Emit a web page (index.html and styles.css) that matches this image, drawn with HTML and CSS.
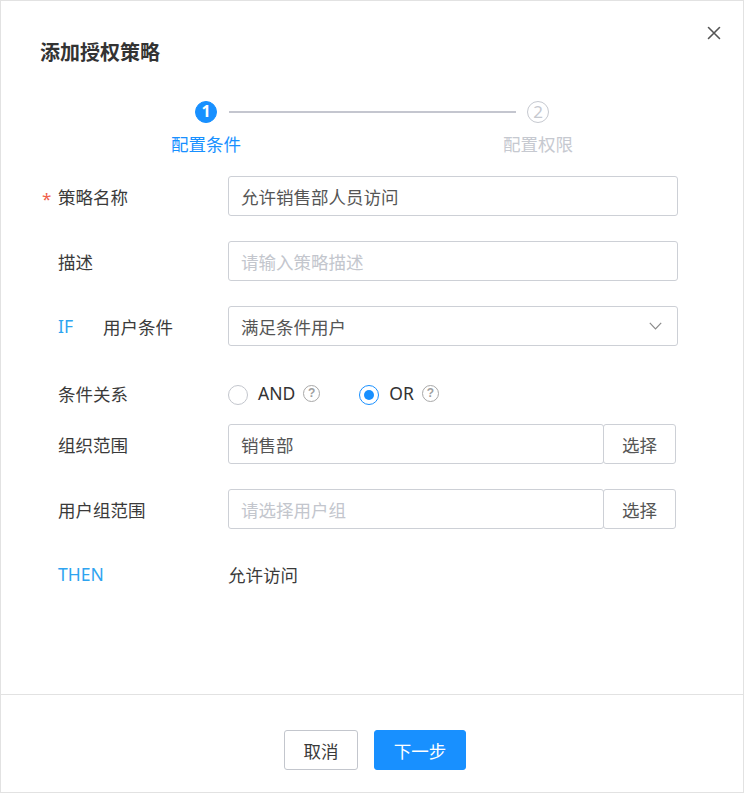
FILE: index.html
```html
<!DOCTYPE html>
<html lang="zh-CN">
<head>
<meta charset="utf-8">
<title>添加授权策略</title>
<link rel="stylesheet" href="styles.css">
</head>
<body>
<div class="dialog">
  <div class="dialog-header">
    <div class="dialog-title">添加授权策略</div>
    <button class="close-btn" aria-label="关闭">
      <svg width="14" height="14" viewBox="0 0 14 14"><path d="M1.5 1.5 L12.5 12.5 M12.5 1.5 L1.5 12.5" stroke="#555" stroke-width="1.6" fill="none" stroke-linecap="round"/></svg>
    </button>
  </div>

  <div class="dialog-body">
    <div class="steps">
      <div class="steps-track">
        <span class="step-circle active">1</span>
        <span class="step-line"></span>
        <span class="step-circle">2</span>
      </div>
      <div class="steps-labels">
        <span class="step-label active">配置条件</span>
        <span class="step-label">配置权限</span>
      </div>
    </div>

    <div class="form">
      <div class="form-row">
        <div class="form-label"><span class="required">*</span>策略名称</div>
        <div class="field"><div class="input">允许销售部人员访问</div></div>
      </div>
      <div class="form-row">
        <div class="form-label"><span class="pad"></span>描述</div>
        <div class="field"><div class="input placeholder">请输入策略描述</div></div>
      </div>
      <div class="form-row">
        <div class="form-label"><span class="pad"></span><span class="kw kw-if">IF</span>用户条件</div>
        <div class="field">
          <div class="input select">
            <span>满足条件用户</span>
            <svg class="chevron" width="13" height="8" viewBox="0 0 13 8"><path d="M0.8 0.8 L6.5 6.8 L12.2 0.8" stroke="#8a8a8a" stroke-width="1.2" fill="none"/></svg>
          </div>
        </div>
      </div>
      <div class="form-row form-row-tight">
        <div class="form-label"><span class="pad"></span>条件关系</div>
        <div class="field radios">
          <label class="radio"><span class="radio-dot"></span><span class="radio-text">AND</span><span class="help">?</span></label>
          <label class="radio checked"><span class="radio-dot"></span><span class="radio-text">OR</span><span class="help">?</span></label>
        </div>
      </div>
      <div class="form-row">
        <div class="form-label"><span class="pad"></span>组织范围</div>
        <div class="field group">
          <div class="input input-left">销售部</div>
          <div class="btn-append">选择</div>
        </div>
      </div>
      <div class="form-row">
        <div class="form-label"><span class="pad"></span>用户组范围</div>
        <div class="field group">
          <div class="input input-left placeholder">请选择用户组</div>
          <div class="btn-append">选择</div>
        </div>
      </div>
      <div class="form-row">
        <div class="form-label"><span class="pad"></span><span class="kw">THEN</span></div>
        <div class="field plain">允许访问</div>
      </div>
    </div>
  </div>

  <div class="dialog-footer">
    <button class="btn btn-default">取消</button>
    <button class="btn btn-primary">下一步</button>
  </div>
</div>
</body>
</html>
```
FILE: styles.css
```css
* { box-sizing: border-box; }
html, body { margin: 0; padding: 0; background: #fff; }
body {
  font-family: "Noto Sans", "Noto Sans CJK SC", sans-serif;
  font-size: 17.5px;
  color: #3a3a3a;
}
.dialog {
  width: 744px;
  height: 793px;
  border: 1px solid #e2e2e2;
  display: flex;
  flex-direction: column;
  background: #fff;
}
.dialog-header {
  display: flex;
  justify-content: space-between;
  align-items: flex-start;
  padding: 24px 21px 0 39px;
}
.dialog-title {
  margin-top: 14px;
  font-size: 20px;
  line-height: 28px;
  font-weight: bold;
  color: #333;
}
.close-btn {
  width: 16px;
  height: 16px;
  padding: 0;
  border: 0;
  background: none;
  display: flex;
  align-items: center;
  justify-content: center;
}
.dialog-body { flex: 1; }

/* steps */
.steps {
  margin: 34px 0 0 145px;
  width: 452px;
}
.steps-track {
  display: flex;
  align-items: center;
  padding: 0 49px;
  height: 22px;
}
.step-circle {
  width: 22px;
  height: 22px;
  border-radius: 50%;
  border: 1.5px solid #c6c9d0;
  color: #c6c9d0;
  font-size: 17px;
  line-height: 19px;
  text-align: center;
  flex: none;
}
.step-circle.active {
  background: #1890ff;
  border-color: #1890ff;
  color: #fff;
  font-weight: bold;
  font-size: 16px;
}
.step-line {
  flex: 1;
  height: 2px;
  background: #c4c6cf;
  margin: 0 11px 0 12px;
}
.steps-labels {
  display: flex;
  justify-content: space-between;
  margin-top: 9px;
}
.step-label {
  width: 120px;
  text-align: center;
  line-height: 24px;
  color: #c6c9d0;
}
.step-label.active { color: #1890ff; }

/* form */
.form {
  margin-top: 20px;
  padding-left: 39px;
}
.form-row {
  display: flex;
  align-items: center;
  height: 40px;
  margin-bottom: 25px;
}
.form-row-tight { margin-top: 27px; margin-bottom: 11px; }
.form-label {
  width: 188px;
  display: flex;
  align-items: center;
  color: #3a3a3a;
  flex: none;
}
.required {
  width: 18px;
  color: #f0604c;
  font-size: 17px;
  padding-left: 2px;
  padding-top: 4px;
}
.pad { width: 18px; }
.kw {
  color: #2ea4f0;
  font-family: "Noto Sans", sans-serif;
}
.kw-if { width: 45px; }
.field { width: 450px; }
.input {
  height: 40px;
  border: 1px solid #cdd0d6;
  border-radius: 3px;
  padding: 0 12px;
  display: flex;
  align-items: center;
  color: #555;
  background: #fff;
}
.input.placeholder { color: #c3c6cd; }
.select { justify-content: space-between; padding-right: 15px; }
.chevron { display: block; }
.group { display: flex; width: 448px; }
.input-left { width: 376px; flex: none; }
.btn-append {
  width: 73px;
  height: 40px;
  margin-left: -1px;
  border: 1px solid #cdd0d6;
  border-radius: 3px;
  display: flex;
  align-items: center;
  justify-content: center;
  color: #555;
  background: #fff;
}
.radios {
  display: flex;
  align-items: center;
  gap: 39px;
}
.radio {
  display: flex;
  align-items: center;
  color: #333;
  font-family: "Noto Sans", sans-serif;
}
.radio-dot {
  width: 20px;
  height: 20px;
  border-radius: 50%;
  border: 1px solid #c3c6cd;
  margin-right: 10px;
  margin-top: 3px;
  display: flex;
  align-items: center;
  justify-content: center;
  background: #fff;
}
.radio.checked .radio-dot { border-color: #1890ff; }
.radio.checked .radio-dot::after {
  content: "";
  width: 10px;
  height: 10px;
  border-radius: 50%;
  background: #1890ff;
}
.radio-text { line-height: 24px; }
.help {
  width: 17px;
  height: 17px;
  margin-left: 8px;
  border-radius: 50%;
  border: 1.5px solid #a8a8a8;
  color: #a0a0a0;
  font-size: 12px;
  font-weight: bold;
  line-height: 14px;
  text-align: center;
  font-family: "Liberation Sans", sans-serif;
}
.plain { color: #3a3a3a; }

/* footer */
.dialog-footer {
  height: 98px;
  border-top: 1px solid #e2e2e2;
  display: flex;
  justify-content: center;
  gap: 16px;
  padding: 35px 0 0 6px;
}
.btn {
  height: 40px;
  border-radius: 3px;
  font-family: "Noto Sans", "Noto Sans CJK SC", sans-serif;
  font-size: 17.5px;
  padding: 0 19px;
  cursor: pointer;
}
.btn-default {
  width: 74px;
  padding: 0;
  background: #fff;
  border: 1px solid #c3c6cd;
  color: #3a3a3a;
}
.btn-primary {
  width: 92px;
  padding: 0;
  background: #1890ff;
  border: 1px solid #1890ff;
  color: #fff;
}
```
